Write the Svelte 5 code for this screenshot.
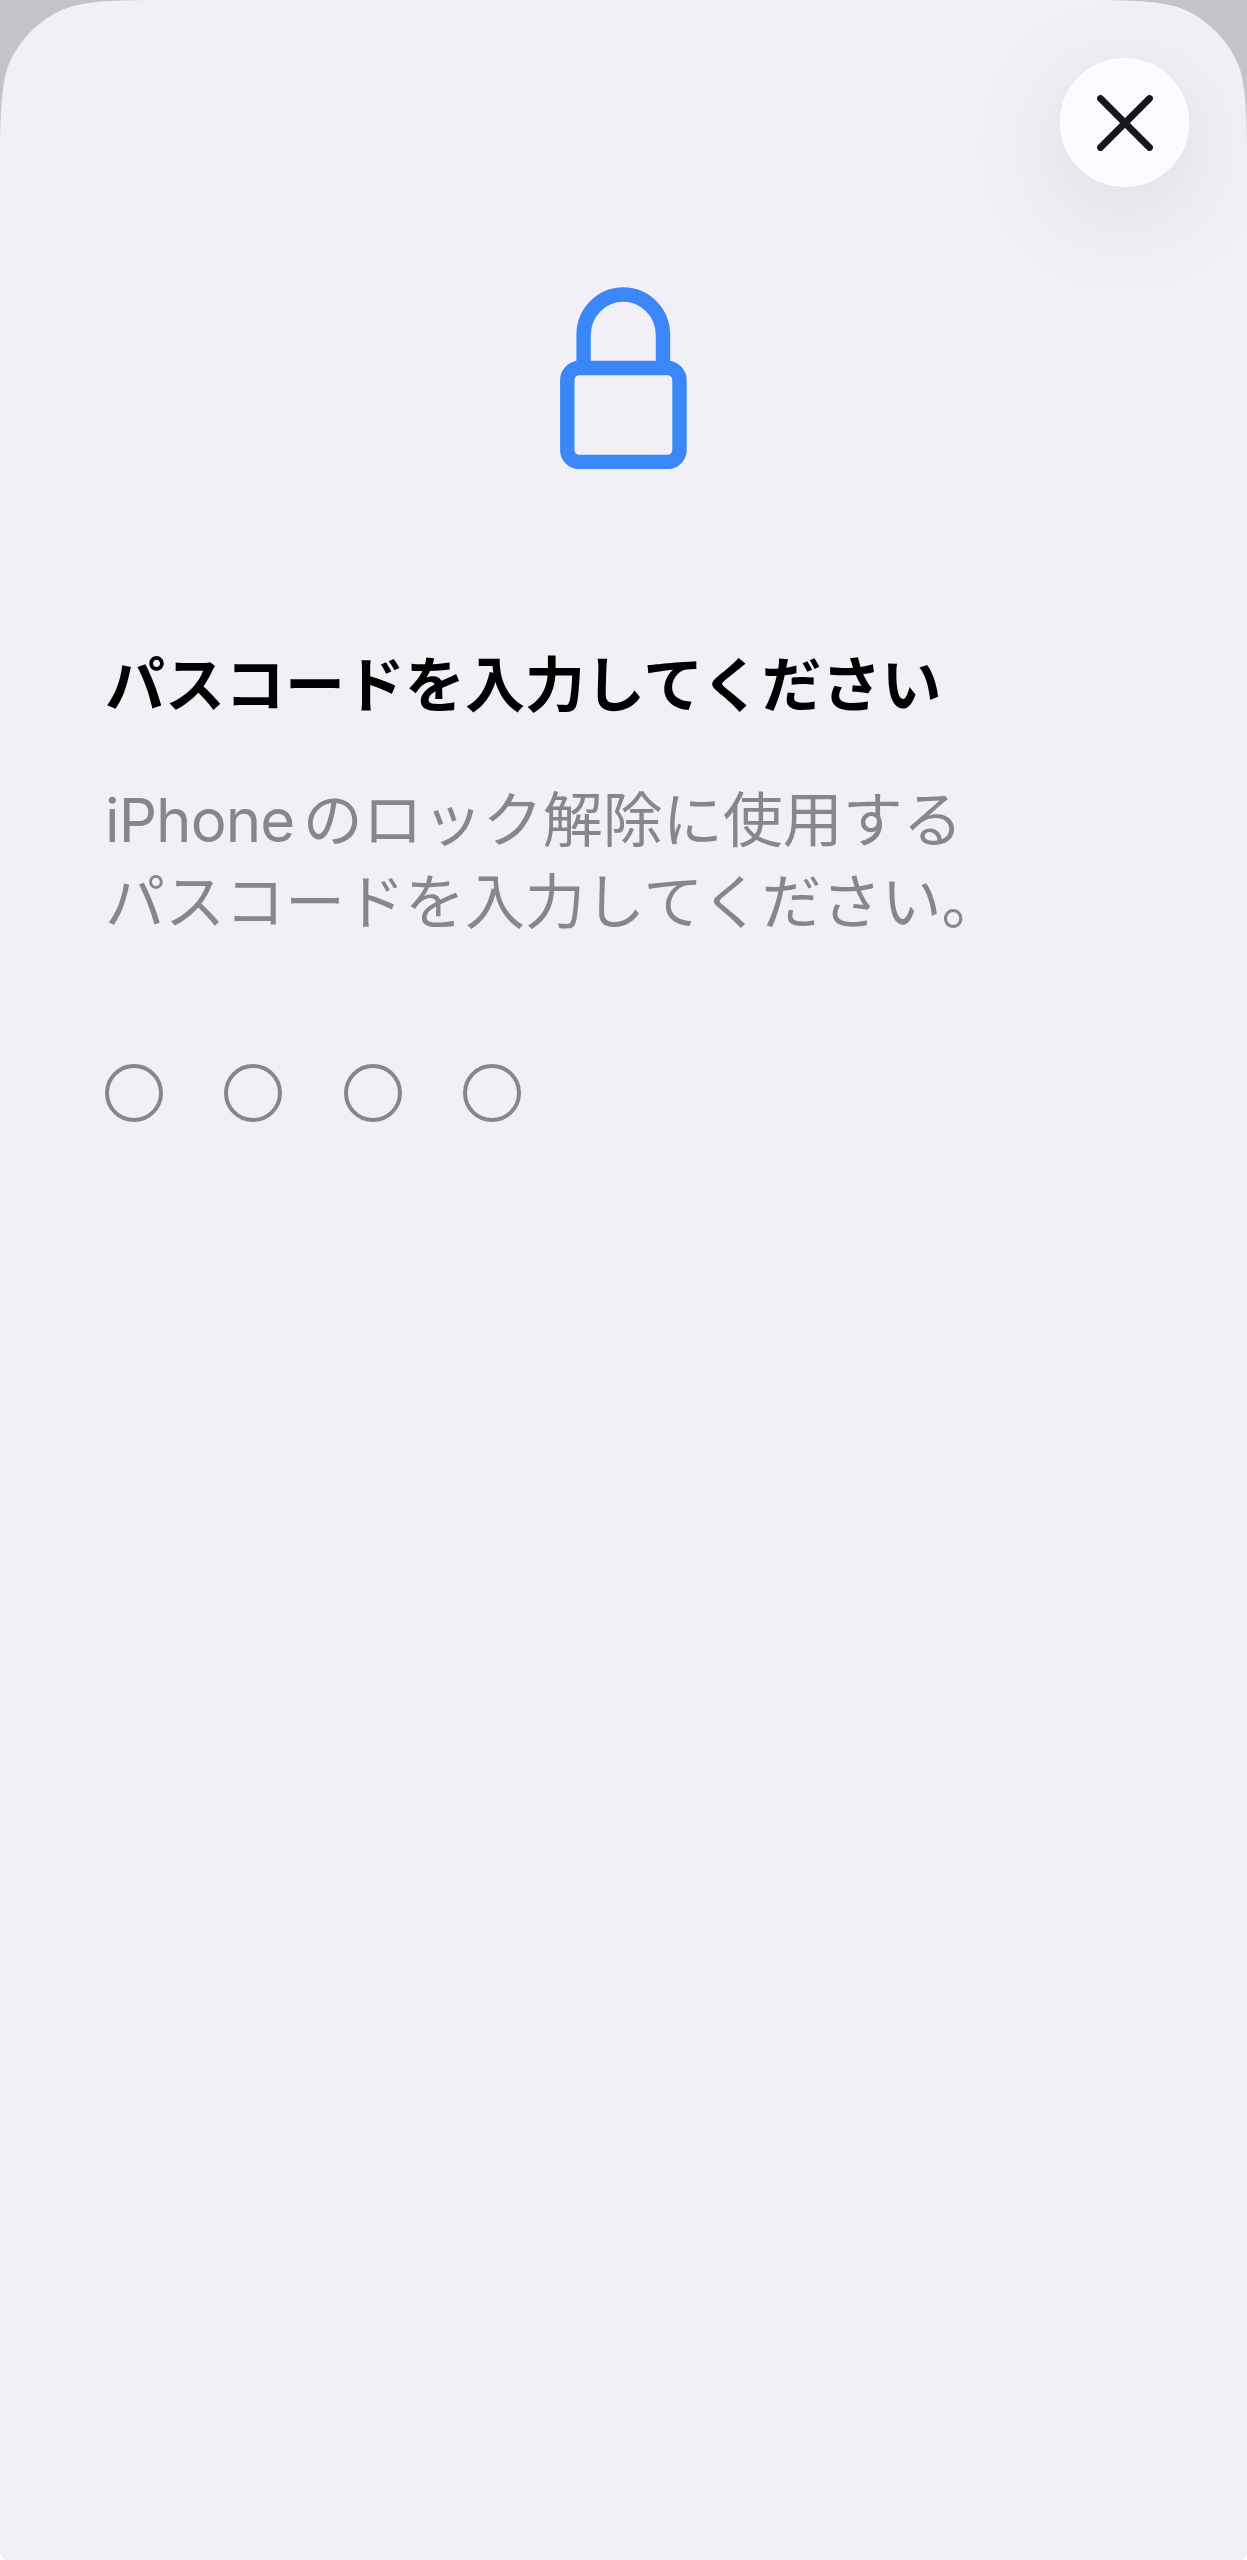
<script>

export let title     = "パスコードを入力してください";
export let lines     = ["のロック解除に使用する", "パスコードを入力してください。"];
export let device    = "iPhone";
export let numDigits = 4;

let passcode = "";

$: digits = Array.from({ length: numDigits }, function (_, i) {
    return i < passcode.length;
});

let clear = function () {
    passcode = "";
}

let keydown = function (e) {
    if(e.key === "Backspace") {
        passcode = passcode.slice(0, -1);
    }

    else

    if(/^[0-9]$/.test(e.key) && passcode.length < numDigits) {
        passcode += e.key;
    }
}

</script>

<svelte:window on:keydown={keydown} />

<div class="screen">
    <main class="sheet">
        <svg class="corner corner-left" viewBox="0 0 146 146" aria-hidden="true">
            <path d="M0 0H146C112 .3 88 1.8 71 6.5C42 15.5 15.5 42 6.5 71C1.8 88 .3 112 0 146Z" />
        </svg>
        <svg class="corner corner-right" viewBox="0 0 146 146" aria-hidden="true">
            <path d="M0 0H146C112 .3 88 1.8 71 6.5C42 15.5 15.5 42 6.5 71C1.8 88 .3 112 0 146Z" />
        </svg>

        <header class="bar">
            <button class="close" type="button" aria-label="閉じる" on:click={clear}>
                <svg viewBox="0 0 56 56">
                    <path d="M3.5 3.5L52.5 52.5M52.5 3.5L3.5 52.5" />
                </svg>
            </button>
        </header>

        <svg class="lock" viewBox="0 0 127 182" aria-hidden="true">
            <path d="M23.6 80V48A39.7 40.5 0 0 1 103 48V80" />
            <rect x="7.3" y="81" width="112.2" height="94" rx="12" />
        </svg>

        <section class="content">
            <h1>{title}</h1>
            <p><span class="device">{device}</span>{lines[0]}<br>{lines[1]}</p>
            <div class="digits">
                {#each digits as filled}
                    <span class="digit" class:filled></span>
                {/each}
            </div>
        </section>
    </main>
</div>

<style>

:global(body) {
    margin: 0;
    background-color: #ffffff;
}

.screen,
.screen * {
    box-sizing: border-box;
}

.screen {
    width: 1247px;
    height: 2560px;
    overflow: hidden;
    font-family: "Inter", "Noto Sans CJK JP", sans-serif;
}

.sheet {
    position: relative;
    height: 100%;
    display: flex;
    flex-direction: column;
    background-color: #f1f0f6;
    border-radius: 0 0 8px 8px;
}

.corner {
    position: absolute;
    z-index: 1;
    top: 0;
    width: 146px;
    height: 146px;
    fill: #c4c3c9;
}

.corner-left {
    left: 0;
}

.corner-right {
    right: 0;
    transform: scaleX(-1);
}

.bar {
    display: flex;
    justify-content: flex-end;
    padding: 58px 58px 0 0;
}

.close {
    width: 129px;
    height: 129px;
    padding: 0;
    display: flex;
    justify-content: center;
    align-items: center;
    border: 2px solid #ffffff;
    border-radius: 50%;
    background-color: #fbfbff;
    box-shadow: 0 24px 110px rgba(0, 0, 0, 0.1);
}

.close svg {
    width: 56px;
    height: 56px;
    fill: none;
    stroke: #18181c;
    stroke-width: 6.8;
    stroke-linecap: round;
}

.lock {
    width: 127px;
    height: 182px;
    margin: 100px auto 0;
    fill: none;
    stroke: #3b87f7;
    stroke-width: 14.4;
}

.content {
    padding: 0 105px;
}

h1 {
    margin: 172px 0 0;
    font-size: 60px;
    font-weight: 700;
    line-height: 88px;
    color: #000000;
}

p {
    margin: 50px 0 0;
    font-size: 60px;
    line-height: 82px;
    color: #87868c;
}

.device {
    margin-right: 8.5px;
    letter-spacing: -0.9px;
}

.digits {
    display: flex;
    gap: 61.3px;
    margin-top: 121px;
}

.digit {
    width: 58px;
    height: 58px;
    border: 4px solid #87868c;
    border-radius: 50%;
}

.digit.filled {
    background-color: #87868c;
}

</style>
